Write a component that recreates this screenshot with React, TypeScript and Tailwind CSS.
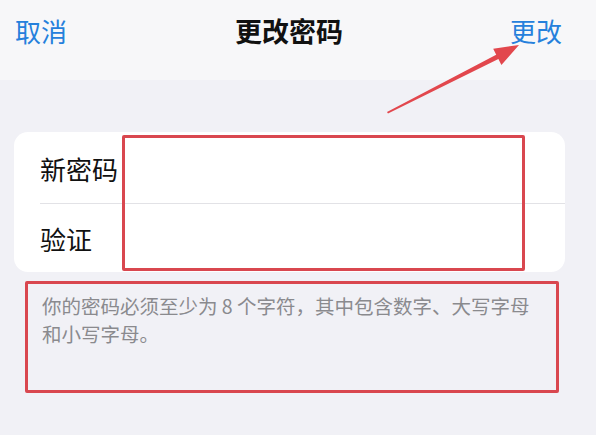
import React from 'react'

const cjk = { fontFamily: '"Noto Sans CJK SC", "Noto Sans", sans-serif' }

function Arrow() {
  // annotation arrow pointing at the confirm button
  return (
    <svg className="pointer-events-none absolute left-0 top-0" width="596" height="435" viewBox="0 0 596 435">
      <polygon
        points="387,112 496.2,54.7 493.2,48.7 519,45 501.4,65.1 498.4,59.1 388,113.5"
        fill="#e2474d"
      />
    </svg>
  )
}

export default function App() {
  return (
    <div className="relative h-[435px] w-[596px] overflow-hidden bg-[#f1f1f6]" style={cjk}>
      <header className="flex h-[80px] items-start bg-[#f7f7f9] pl-[15px] pr-[34px] pt-[14px]">
        <button className="text-[26px] leading-[34px] text-[#2580dc]">取消</button>
        <h1 className="ml-[168px] text-[27px] font-bold leading-[34px] text-[#111]">更改密码</h1>
        <button className="ml-auto text-[26px] leading-[34px] text-[#2580dc]">更改</button>
      </header>

      <div className="mx-[14px] mt-[52px] w-[551px] rounded-[14px] bg-white">
        <div className="flex h-[71px] items-center pl-[26px] pt-[2px] text-[26px] text-[#111]">新密码</div>
        <div className="ml-[26px] h-px bg-[#e2e2e6]" />
        <div className="flex h-[68px] items-center pl-[26px] text-[26px] text-[#111]">验证</div>
      </div>

      <div className="ml-[25px] mt-[9px] h-[112px] w-[534px] rounded-[2px] border-[3px] border-[#d9474f] pl-[14px] pt-[8px]">
        <p className="whitespace-nowrap text-[19.5px] leading-[28px] text-[#8a8a8e]">
          你的密码必须至少为 8 个字符，其中包含数字、大写字母
          <br />
          和小写字母。
        </p>
      </div>

      <div className="absolute left-[122px] top-[135px] h-[136px] w-[403px] rounded-[2px] border-[3px] border-[#d9474f]" />
      <Arrow />
    </div>
  )
}
